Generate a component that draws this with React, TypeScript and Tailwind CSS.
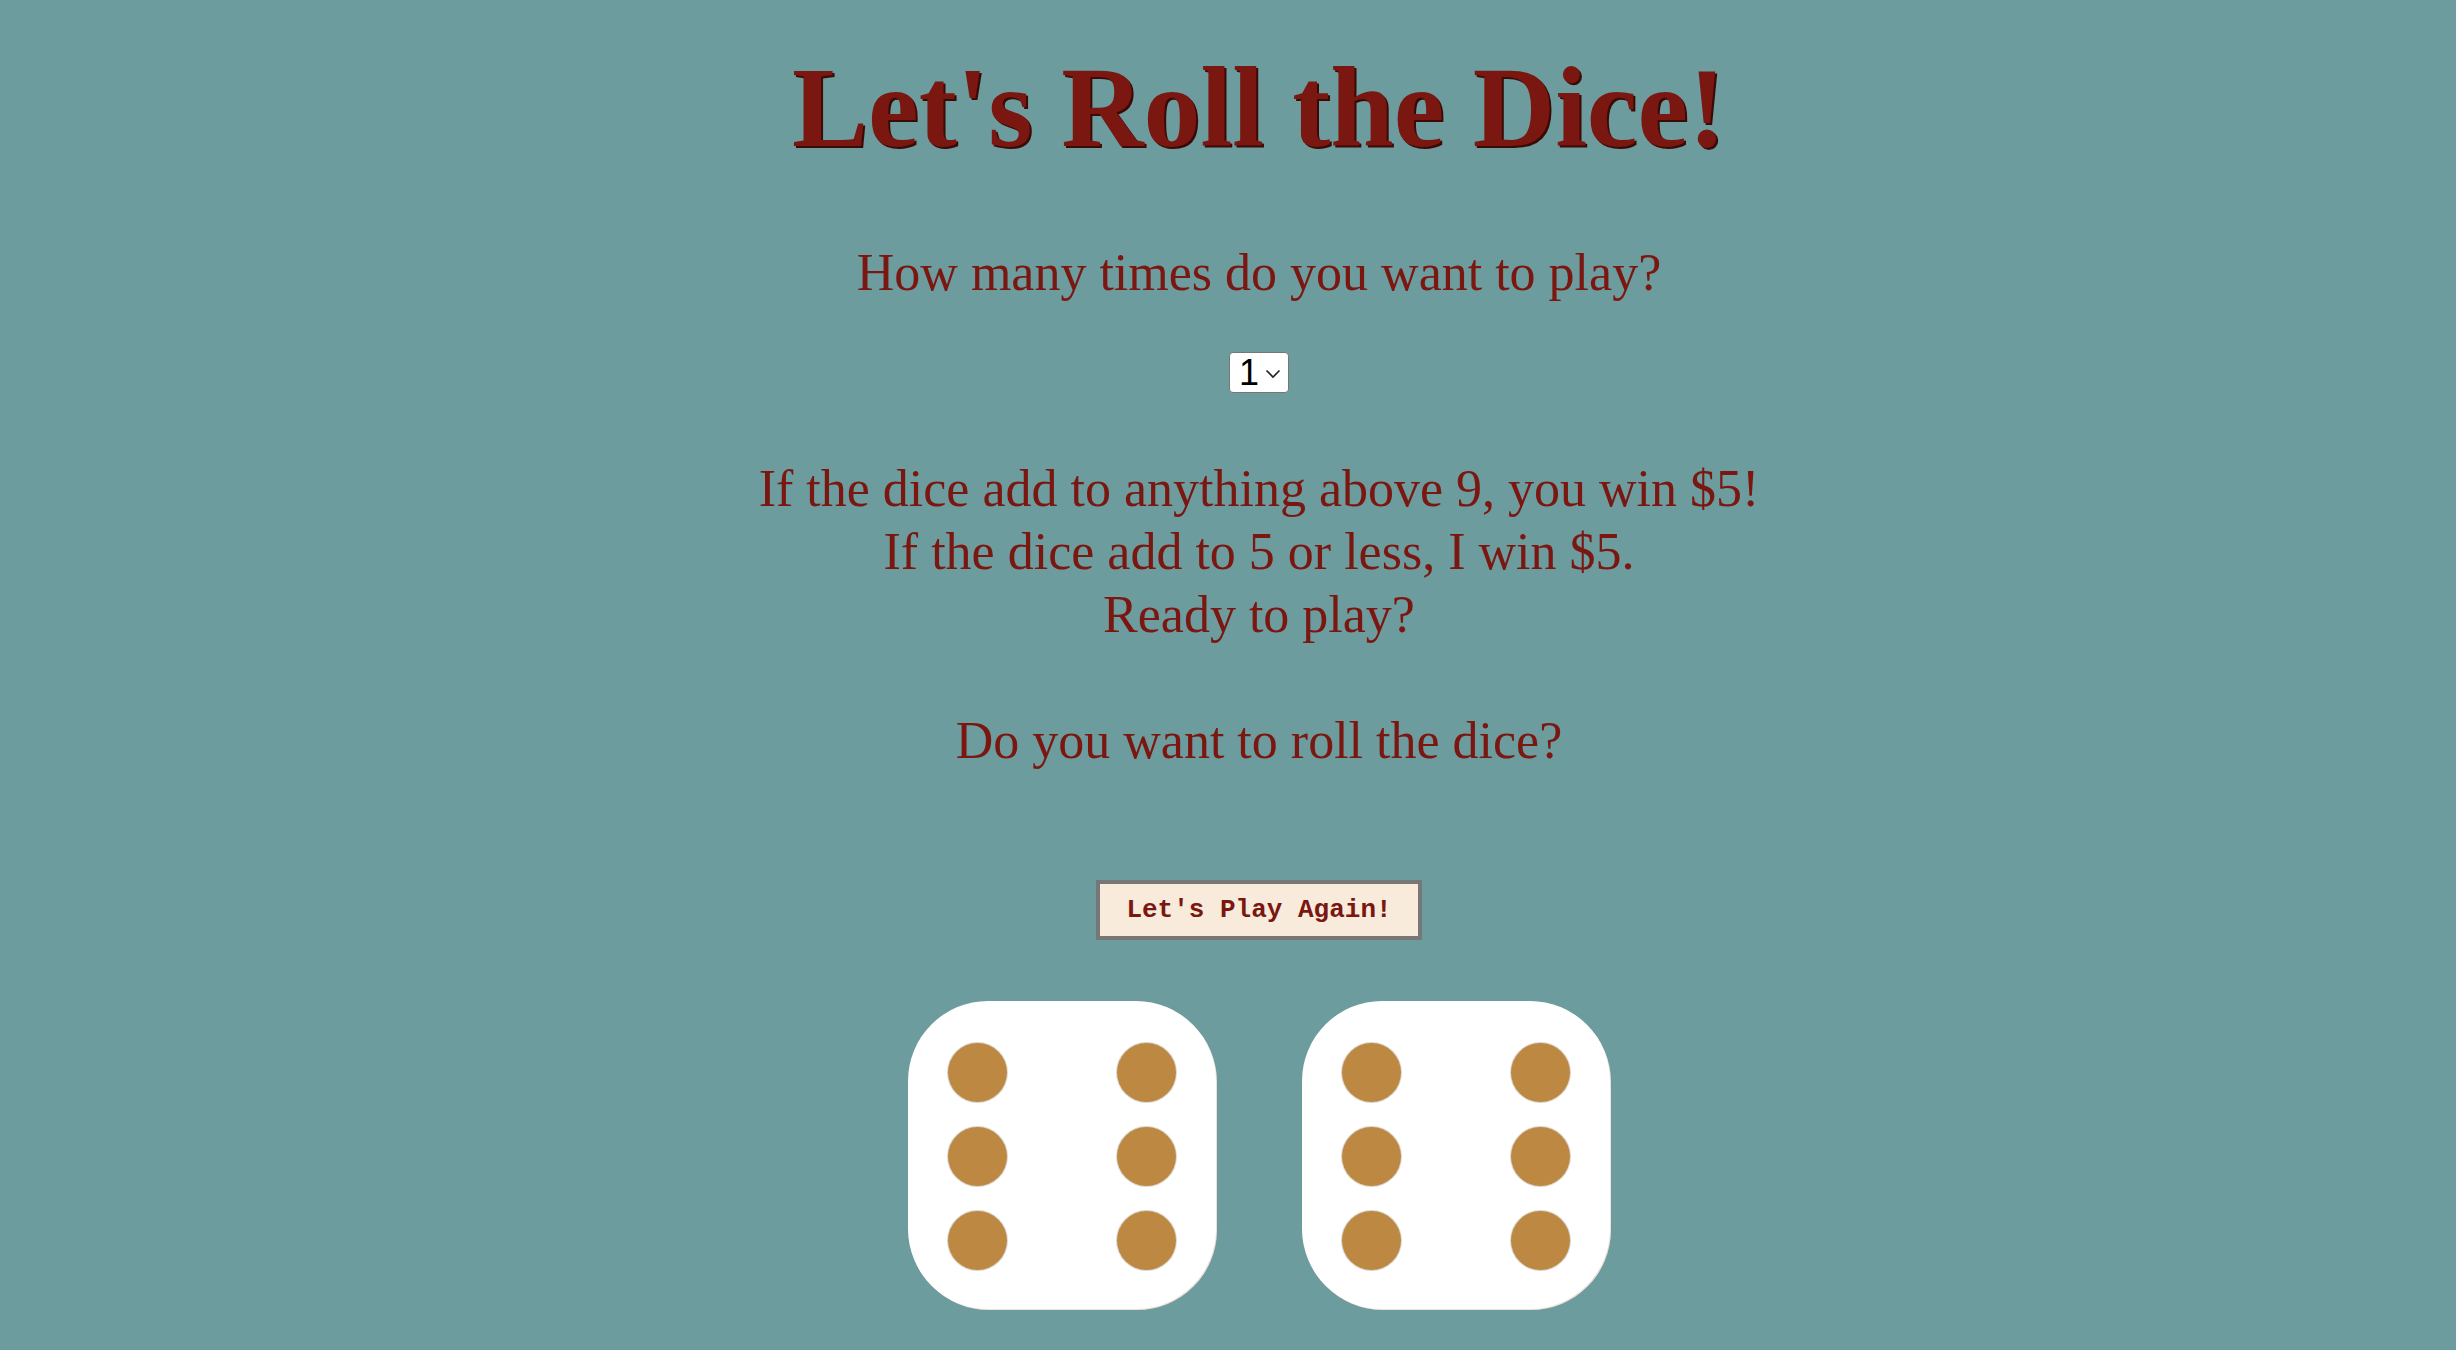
import { useState } from "react";

const serif = "font-['Liberation_Serif','Times_New_Roman',serif]";

function Die() {
  return (
    <div className="w-[308px] h-[308px] rounded-[80px] bg-white pt-[42px] px-[40px] shadow-[1px_1px_0_#efe1da]">
      <div className="grid grid-cols-[59px_59px] gap-x-[110px] gap-y-[25px]">
        {Array.from({ length: 6 }).map((_, i) => (
          <div key={i} className="w-[59px] h-[59px] rounded-full bg-[#bd8942] shadow-[0_0_0_1px_rgba(150,140,120,0.35)]" />
        ))}
      </div>
    </div>
  );
}

export default function App() {
  const [times, setTimes] = useState("1");

  return (
    <div className="min-h-screen bg-[#6d9c9e] text-[#7a1711]">
      <div className={`flex flex-col items-center pl-[62px] ${serif}`}>
        <h1 className="mt-[40px] text-[114px] leading-[136px] font-bold [text-shadow:2px_2px_0_#3a0a06]">
          Let's Roll the Dice!
        </h1>

        <p className="mt-[65px] text-[52px] leading-[63px]">How many times do you want to play?</p>

        {/* times selector */}
        <div className="relative mt-[48px] w-[60px] h-[41px] rounded-[4px] border border-[#767676] bg-white">
          <select
            value={times}
            onChange={(e) => setTimes(e.target.value)}
            className="appearance-none w-full h-full bg-transparent pl-[9px] font-['Liberation_Sans',Arial,sans-serif] text-[36px] leading-[39px] text-black outline-none"
          >
            {[1, 2, 3, 4, 5].map((n) => (
              <option key={n} value={n}>
                {n}
              </option>
            ))}
          </select>
          <svg
            className="pointer-events-none absolute left-[35px] top-[16px]"
            width="16"
            height="10"
            viewBox="0 0 16 10"
            fill="none"
          >
            <path d="M1.5 1.5 L8 8 L14.5 1.5" stroke="#222" strokeWidth="1.6" />
          </svg>
        </div>

        <p className="mt-[64px] text-center text-[52px] leading-[63px]">
          If the dice add to anything above 9, you win $5!
          <br />
          If the dice add to 5 or less, I win $5.
          <br />
          Ready to play?
          <br />
          <br />
          Do you want to roll the dice?
        </p>

        <button className="mt-[108px] w-[326px] h-[60px] border-4 border-[#777777] bg-[#f9ebdb] font-['Liberation_Mono','Courier_New',monospace] text-[26px] font-bold text-[#7a1711]">
          Let's Play Again!
        </button>

        <div className="mt-[61px] flex gap-[86px] pb-[40px]">
          <Die />
          <Die />
        </div>
      </div>
    </div>
  );
}
